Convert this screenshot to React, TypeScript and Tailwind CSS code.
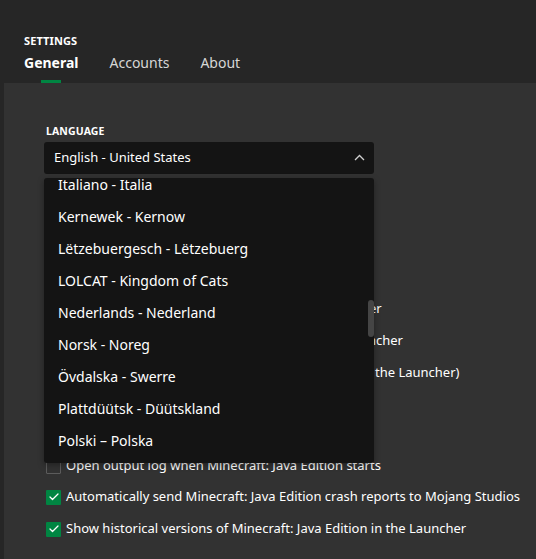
import { Check } from "lucide-react";

const languages = [
  "Italiano - Italia",
  "Kernewek - Kernow",
  "Lëtzebuergesch - Lëtzebuerg",
  "LOLCAT - Kingdom of Cats",
  "Nederlands - Nederland",
  "Norsk - Noreg",
  "Övdalska - Swerre",
  "Plattdüütsk - Düütskland",
  "Polski – Polska",
  "Português - Brasil",
];

// rows partly hidden behind the open language list
const options: { label: string; checked: boolean; h: string }[] = [
  { label: "Animate transitions between pages of the Launcher", checked: true, h: "h-8" },
  { label: "Show Minecraft: Java Edition snapshots in the Launcher", checked: false, h: "h-8" },
  { label: "Disable hardware acceleration (requires restarting the Launcher)", checked: false, h: "h-8" },
  { label: "Show snapshots in the Launcher", checked: true, h: "h-8" },
  { label: "Keep the Launcher open", checked: false, h: "h-[30px]" },
  { label: "Open output log when Minecraft: Java Edition starts", checked: false, h: "h-[30px]" },
  { label: "Automatically send Minecraft: Java Edition crash reports to Mojang Studios", checked: true, h: "h-8" },
  { label: "Show historical versions of Minecraft: Java Edition in the Launcher", checked: true, h: "h-8" },
];

function Checkbox({ checked }: { checked: boolean }) {
  if (checked) {
    return (
      <span className="flex h-[15px] w-[15px] shrink-0 items-center justify-center rounded-[1px] bg-[#008542]">
        <Check className="h-3 w-3 text-white" strokeWidth={2.5} />
      </span>
    );
  }
  return <span className="h-[15px] w-[15px] shrink-0 rounded-[1px] border border-[#5c5c5c]" />;
}

export default function App() {
  return (
    <div className="h-[559px] w-[536px] overflow-hidden bg-[#262626] font-['Noto_Sans',sans-serif] text-white">
      <header className="px-6 pt-[34px]">
        <p className="text-[11px] font-bold leading-[14px] tracking-[0.01em]">SETTINGS</p>
        <nav className="mt-[5px] flex gap-[31px]">
          <div className="flex flex-col items-center">
            <span className="h-5 text-[14px] font-bold leading-5">General</span>
            <span className="mt-[7px] h-[3px] w-5 bg-[#008542]" />
          </div>
          <span className="h-5 text-[14px] leading-5 text-[#d6d6d6]">Accounts</span>
          <span className="h-5 text-[14px] leading-5 text-[#d6d6d6]">About</span>
        </nav>
      </header>

      <main className="ml-1 h-full bg-[#323232] pl-10 pt-[41px]">
        <div className="relative w-[330px]">
          <p className="ml-0.5 text-[10.5px] font-bold leading-[14px] tracking-[0.01em]">LANGUAGE</p>
          <button className="mt-[4px] flex h-8 w-full items-center justify-between rounded-[3px] bg-[#141414] pl-2.5 pr-[9px] text-[13px]">
            <span>English - United States</span>
            <svg width="11" height="7" viewBox="0 0 11 7" className="mb-0.5">
              <path d="M1 6 L5.5 1.5 L10 6" fill="none" stroke="#d0d0d0" strokeWidth="1.3" />
            </svg>
          </button>

          <div className="absolute left-0 top-[54px] z-10 h-[285px] w-[330px] overflow-hidden rounded-[3px] bg-[#141414] shadow-[0_2px_6px_rgba(0,0,0,0.35)]">
            <ul className="-mt-[10px]">
              {languages.map((lang) => (
                <li key={lang} className="flex h-8 items-center pl-[14px] text-[14px]">
                  {lang}
                </li>
              ))}
            </ul>
            <span className="absolute right-0 top-[122px] h-[37px] w-[6px] rounded-[3px] bg-[#454545]" />
          </div>
        </div>

        <div className="mt-[119px] flex flex-col">
          {options.map((opt) => (
            <label
              key={opt.label}
              className={`flex items-center gap-[5px] pl-0.5 text-[13px] ${opt.h}`}
            >
              <Checkbox checked={opt.checked} />
              <span className="whitespace-nowrap">{opt.label}</span>
            </label>
          ))}
        </div>
      </main>
    </div>
  );
}
